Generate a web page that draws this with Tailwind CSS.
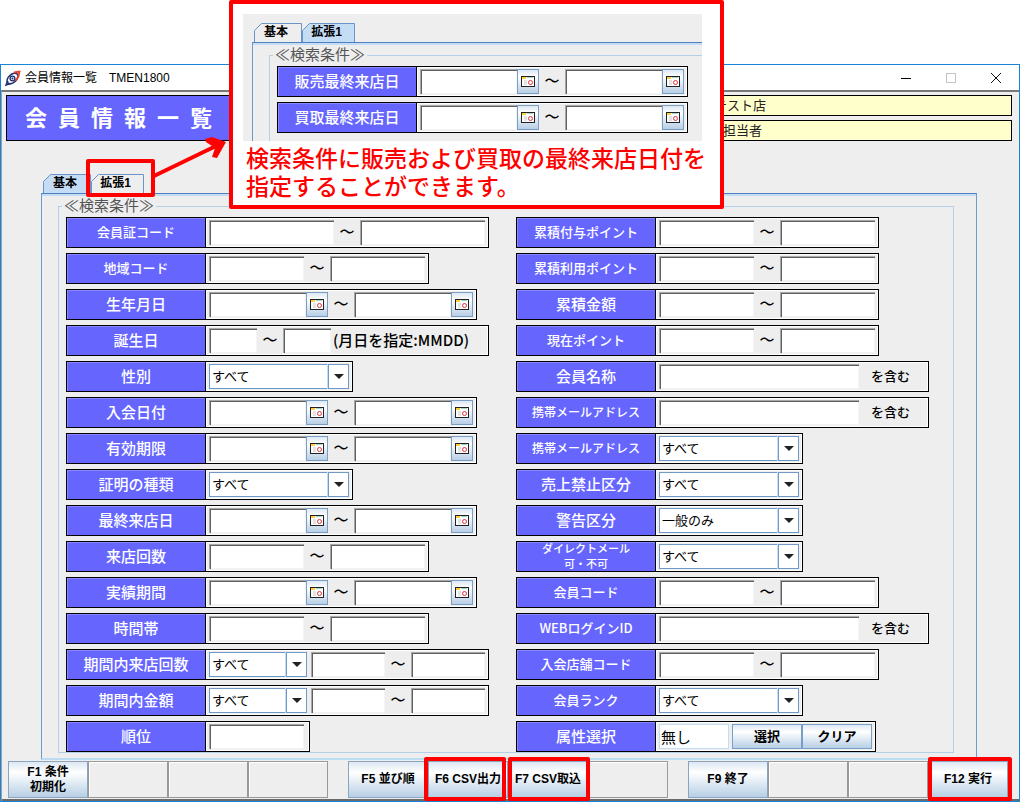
<!DOCTYPE html>
<html lang="ja">
<head>
<meta charset="utf-8">
<title>会員情報一覧 TMEN1800</title>
<script src="https://cdn.jsdelivr.net/npm/@tailwindcss/browser@4"></script>
</head>
<body class="relative flex min-h-screen flex-col bg-white pt-16 font-['Liberation_Sans','Noto_Sans_CJK_JP',sans-serif] text-black">

<div class="flex flex-1 flex-col border border-[#1883d7]">
  <!-- Title bar -->
  <div class="flex h-[25px] items-center pl-1 pr-[13px]">
    <svg class="mr-1 size-4" viewBox="0 0 16 16" fill="none">
      <ellipse cx="7.500" cy="8.500" rx="6.500" ry="4" transform="rotate(-42 7.500 8.500)" stroke="#1d2f6f" stroke-width="1.5"/>
      <path d="M9 2.500 14.500 1.500 13.500 6.500 10.500 11" stroke="#e8402a" stroke-width="1.800"/>
      <path d="M3 11 1 15 5.500 13.500" stroke="#1d2f6f" stroke-width="1.5"/>
      <circle cx="7.500" cy="8.500" r="2.400" fill="#fff" stroke="#1d2f6f" stroke-width="1.300"/>
      <circle cx="7.500" cy="8.500" r="1" fill="#1d2f6f"/>
    </svg>
    <h1 class="flex-1 whitespace-pre text-[12px] leading-4">会員情報一覧　TMEN1800</h1>
    <div class="flex gap-[25px]">
      <button type="button" aria-label="最小化" class="size-5"><svg viewBox="0 0 20 20" stroke="#000" shape-rendering="crispEdges"><path d="M5 10.500h10"/></svg></button>
      <button type="button" aria-label="最大化" class="size-5"><svg viewBox="0 0 20 20" fill="none" stroke="#c4c4c4" shape-rendering="crispEdges"><path d="M5.500 5.500h9v9h-9z"/></svg></button>
      <button type="button" aria-label="閉じる" class="size-5"><svg viewBox="0 0 20 20" stroke="#111"><path d="M5 5l10 10M15 5L5 15"/></svg></button>
    </div>
  </div>

  <div class="flex flex-1 flex-col border-t-2 border-l border-t-[#787878] border-l-[#a0a0a0] bg-[#eeeeee]">
    <!-- Header -->
    <header class="flex gap-1 pt-[3px] pr-[7px] pl-1">
      <h2 class="flex h-[46px] w-[400px] items-center whitespace-pre border border-black bg-[#6666ff] pl-[18px] text-[22px] font-bold text-white">会&ensp;員&ensp;情&ensp;報&ensp;一&ensp;覧</h2>
      <div class="flex flex-1 flex-col gap-1 pl-[200px] text-[13px] leading-[19px] text-[#222]">
        <p class="border border-black bg-[#ffffcc] pl-[103px]">テスト店</p>
        <p class="border border-black bg-[#ffffcc] pl-[112px]">担当者</p>
      </div>
    </header>

    <!-- Search panel -->
    <main class="mt-[33px] mr-[42px] ml-[39px] flex flex-1 flex-col">
      <div class="flex pl-[2px]" role="tablist" data-tabs="0"></div>
      <div class="flex flex-1 flex-col border-x border-t border-b-2 border-x-[#6b9ccc] border-t-[#4f7fbf] border-b-[#bcdcf4]">
        <div class="h-[2px] bg-[#c4dcf4]"></div>
        <fieldset class="mr-[22px] ml-4 border border-[#b4cfe8] pl-[7px]">
          <legend class="-ml-1 px-[2px] text-[15px] leading-5 text-[#555]">≪検索条件≫</legend>
          <div class="grid grid-cols-[450px_1fr]">
            <div id="left" class="flex flex-col items-start gap-[5px] pt-px"></div>
            <div id="right" class="flex flex-col items-start gap-[5px] pt-px"></div>
          </div>
        </fieldset>
      </div>
    </main>

    <!-- Function keys -->
    <footer class="grid grid-cols-3 gap-5 border-b-2 border-[#6a6a6a] pt-px pr-[11px] pb-px pl-[6px] text-[12px] leading-[15px] font-bold" id="keys"></footer>
  </div>
</div>

<!-- Callout with the extended tab -->
<svg class="absolute top-[130px] left-[150px] h-[50px] w-[80px]" viewBox="0 0 80 50" fill="none" stroke="#fe0000">
  <path d="M4 46 68 15" stroke-width="4"/><path d="M55 9 62 7 76 12 67 28 62 27 65 18 56 12z" fill="#fe0000" stroke="none"/>
</svg>
<div class="absolute top-[159px] left-[86px] h-[38px] w-[69px] rounded-xs border-4 border-[#fe0000]"></div>
<section class="absolute top-0 left-[229px] w-[495px] rounded-xs border-4 border-[#fe0000] bg-white px-[10px] pt-[10px] pb-1">
  <div class="mr-2 bg-[#eeeeee] pt-[9px] pl-[9px]">
    <div class="flex pl-[2px]" role="tablist" data-tabs="1"></div>
    <div class="border-t border-l border-t-[#4f7fbf] border-l-[#6b9ccc]">
      <div class="h-[2px] bg-[#c4dcf4]"></div>
      <fieldset class="ml-4 border-t border-l border-[#b4cfe8] pb-2 pl-[7px]">
        <legend class="-ml-1 px-[2px] text-[15px] leading-5 text-[#555]">≪検索条件≫</legend>
        <div id="extra" class="flex flex-col items-start gap-[5px] pt-px"></div>
      </fieldset>
    </div>
  </div>
  <p class="mt-1 ml-[3px] whitespace-nowrap text-[23px] leading-7 font-medium text-[#fe0000]">検索条件に販売および買取の最終来店日付を<br>指定することができます。</p>
</section>

<script>
let n = 0;
const input = (w, id, name) => `<input type="text" id="${id}" aria-label="${name}" class="h-[25px] bg-white px-1 text-[13px] outline-none shadow-[inset_1px_1px_0_#a8a8a8,inset_2px_2px_0_#606060,inset_-1px_-1px_0_#f4f4f4] ${w}">`;
const tilde = '<span class="w-[26px] text-center text-[15px] leading-[23px] font-medium">～</span>';
const cal = '<button type="button" aria-label="カレンダー" class="flex h-[25px] w-[22px] items-center justify-center border border-[#7a9fc6] bg-linear-to-b from-[#dde8f3] via-white via-30% to-[#b8cfe5]"><svg class="h-[11px] w-[14px]" viewBox="0 0 14 11" shape-rendering="crispEdges"><path d="M.5.5h13v10H.5z" fill="#fff" stroke="#222"/><path d="M1 1h4v2H1z" fill="#ffd23c"/><path d="M6 1h6v1H6z" fill="#9fd8c8"/><path d="M3 4h3v5H3z" fill="#e4e4e4"/><circle cx="9.500" cy="6.500" r="2" fill="none" stroke="#e8303a" shape-rendering="auto"/></svg></button>';
const select = (w, id, text) => `<span class="relative block h-[25px] ${w}"><select id="${id}" class="size-full appearance-none border border-[#6f9ac8] bg-white pl-[2px] text-[13px] outline-none"><option>${text}</option></select><span class="pointer-events-none absolute inset-y-0 right-0 flex w-[21px] items-center justify-center border-l border-[#6f9ac8] shadow-[-1px_0_0_#c4dcf4]"><svg class="h-[5px] w-[10px]" viewBox="0 0 10 5"><path d="M0 0h10L5 5z" fill="#222"/></svg></span></span>`;
const W = { a: 'w-[125px]', b: 'w-[95px]', c: 'w-[97px]', d: 'w-[48px]', e: 'w-[200px]', f: 'w-[74px]' };
const note = "class=\"font-['Noto_Sans_CJK_JP',sans-serif] leading-[23px] font-medium";
const kinds = {
  range: (id, s, t) => input(W[s], id, t + ' 開始') + tilde + input(W[s], id + 'b', t + ' 終了'),
  date: (id, s, t) => input(W.c, id, t + ' 開始') + cal + tilde + input(W.c, id + 'b', t + ' 終了') + cal,
  birth: (id, s, t) => input(W.d, id, t + ' 開始') + tilde + input(W.d, id + 'b', t + ' 終了') + `<span ${note} w-[154px] pl-[2px] text-[15px] whitespace-nowrap">(月日を指定:MMDD)</span>`,
  select: (id, s) => select('w-[140px]', id, s),
  mixed: (id, s, t) => select('w-[98px] mr-1', id, s) + input(W.f, id + 'a', t + ' 開始') + tilde + input(W.f, id + 'b', t + ' 終了'),
  single: (id, s, t) => input(W.b, id, t) + '<span class="w-[2px]"></span>',
  contains: (id, s, t) => input(W.e, id, t) + `<span ${note} w-[66px] pl-3 text-[13px]">を含む</span>`,
  pick: (id) => `<input id="${id}" readonly value="無し" class="mr-[3px] h-[25px] w-[70px] border border-[#c4dcf4] bg-white pl-px text-[15px]">`
    + ['選択', 'クリア'].map(b => `<button type="button" class="h-[25px] w-[70px] border border-[#7a9fc6] bg-linear-to-b from-[#dde8f3] via-white via-30% to-[#b8cfe5] text-[13px] font-bold">${b}</button>`).join('')
};
function rows(target, list) {
  document.getElementById(target).innerHTML = list.map(([t, kind, s]) => {
    const id = 'f' + (++n);
    const two = t.includes('|');
    const size = two ? 'text-[11px] leading-[15px]'
      : !/[ァ-ヴ]/.test(t) ? 'text-[15px] leading-5'
      : t.length === 9 && !t.startsWith('WEB') ? 'text-[12px] leading-5' : 'text-[13px] leading-5';
    const text = t.split('|').map(l => `<span class="block">${l}</span>`).join('');
    return `<div class="flex border border-black bg-[#eeeeee]"><label for="${id}" class="flex h-[29px] w-[139px] flex-col items-center justify-center border-r border-black bg-[#6666ff] pb-px text-center font-['Noto_Sans_CJK_JP',sans-serif] font-medium text-white shadow-[inset_1px_1px_0_#8888ff] ${size}">${text}</label><div class="flex py-[2px] px-[3px] shadow-[inset_0_0_0_1px_#fff]">${kinds[kind](id, s, t.replace('|', ''))}</div></div>`;
  }).join('');
}
rows('left', [
  ['会員証コード', 'range', 'a'], ['地域コード', 'range', 'b'], ['生年月日', 'date'], ['誕生日', 'birth'],
  ['性別', 'select', 'すべて'], ['入会日付', 'date'], ['有効期限', 'date'], ['証明の種類', 'select', 'すべて'],
  ['最終来店日', 'date'], ['来店回数', 'range', 'b'], ['実績期間', 'date'], ['時間帯', 'range', 'b'],
  ['期間内来店回数', 'mixed', 'すべて'], ['期間内金額', 'mixed', 'すべて'], ['順位', 'single']
]);
rows('right', [
  ['累積付与ポイント', 'range', 'b'], ['累積利用ポイント', 'range', 'b'], ['累積金額', 'range', 'b'], ['現在ポイント', 'range', 'b'],
  ['会員名称', 'contains'], ['携帯メールアドレス', 'contains'], ['携帯メールアドレス', 'select', 'すべて'], ['売上禁止区分', 'select', 'すべて'],
  ['警告区分', 'select', '一般のみ'], ['ダイレクトメール|可・不可', 'select', 'すべて'], ['会員コード', 'range', 'b'], ['WEBログインID', 'contains'],
  ['入会店舗コード', 'range', 'b'], ['会員ランク', 'select', 'すべて'], ['属性選択', 'pick']
]);
rows('extra', [['販売最終来店日', 'date'], ['買取最終来店日', 'date']]);

document.querySelectorAll('[data-tabs]').forEach(el => {
  el.innerHTML = ['基本', '拡張1'].map((t, i) => {
    const on = +el.dataset.tabs === i;
    const w = i ? 53 : 48;
    return `<button type="button" role="tab" aria-selected="${on}" class="relative h-[19px] pr-1 text-[12px] leading-[19px] font-bold ${i ? 'w-[53px]' : 'w-[48px]'}"><svg class="absolute inset-0 size-full" viewBox="0 0 ${w} 19"><path d="M.5 19V7.500L7.500 .5H${w - .5}V19" fill="${on ? '#c4dcf4' : '#eeeeee'}" stroke="#6b94c8"/></svg><span class="relative">${t}</span></button>`;
  }).join('');
});

const marks = {
  F6: '<span class="pointer-events-none absolute -top-1 right-[2px] -bottom-[3px] -left-1 z-10 rounded-xs border-4 border-[#fe0000]"></span>',
  F7: '<span class="pointer-events-none absolute -top-1 -right-[2px] -bottom-[3px] left-0 z-10 rounded-xs border-4 border-[#fe0000]"></span>',
  F12: '<span class="pointer-events-none absolute -top-1 -right-1 -bottom-[3px] left-0 z-10 rounded-xs border-4 border-[#fe0000]"></span>'
};
document.getElementById('keys').innerHTML = [['F1 条件<br>初期化', '', '', ''], ['F5 並び順', 'F6 CSV出力', 'F7 CSV取込', ''], ['F9 終了', '', '', 'F12 実行']]
  .map(g => '<div class="grid grid-cols-4">' + g.map(k => k
    ? `<div class="relative"><button type="button" class="h-[37px] w-full whitespace-nowrap border border-[#8ba4c0] bg-linear-to-b from-[#dde8f3] via-white via-30% to-[#b8cfe5] px-0">${k}</button>${marks[k.split(' ')[0]] || ''}</div>`
    : '<div class="h-[37px] border border-[#999] shadow-[inset_1px_1px_0_#fff]"></div>').join('') + '</div>').join('');
</script>
</body>
</html>
